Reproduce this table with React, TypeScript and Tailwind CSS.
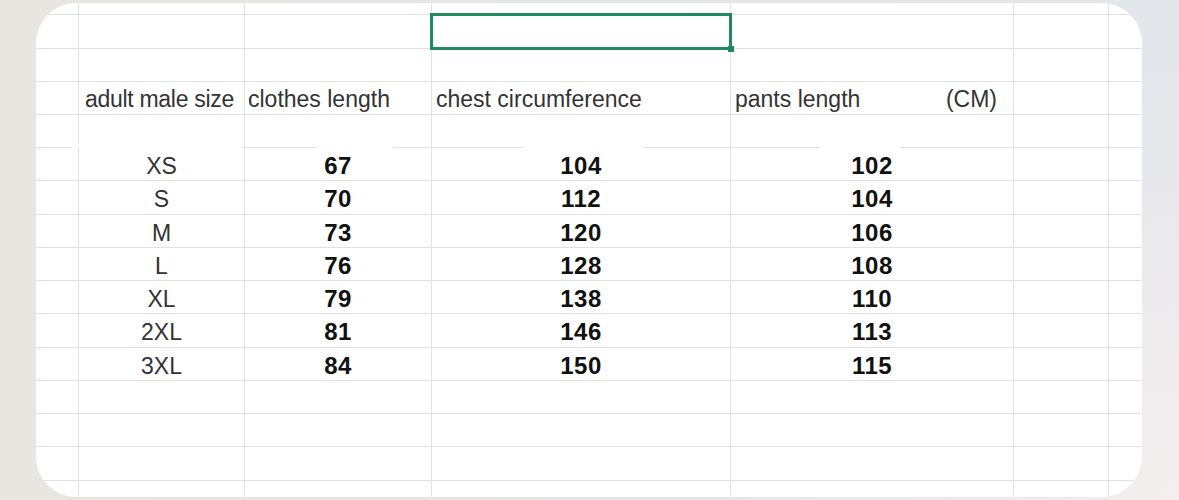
const rowHeights = [34, 33, 33, 33, 33, 34, 33, 33, 33, 34, 33, 33, 33, 34];

const sizes = [
  { size: "XS", clothes: 67, chest: 104, pants: 102 },
  { size: "S", clothes: 70, chest: 112, pants: 104 },
  { size: "M", clothes: 73, chest: 120, pants: 106 },
  { size: "L", clothes: 76, chest: 128, pants: 108 },
  { size: "XL", clothes: 79, chest: 138, pants: 110 },
  { size: "2XL", clothes: 81, chest: 146, pants: 113 },
  { size: "3XL", clothes: 84, chest: 150, pants: 115 },
];

const cols = "grid grid-cols-[42px_166px_187px_299px_283px_95px_34px]";
const cell = "border-l border-[#e2e2e2] first:border-l-0";
const num = `${cell} flex items-center justify-center pb-[1px] text-[24px] font-bold tracking-[0.5px] text-[#111]`;
const head = `${cell} flex items-center text-[23px] whitespace-nowrap text-[#333]`;

function EmptyCells() {
  return (
    <>
      {Array.from({ length: 7 }).map((_, i) => (
        <div key={i} className={cell} />
      ))}
    </>
  );
}

function Row({ index, children }: { index: number; children?: React.ReactNode }) {
  return (
    <div
      className={`${cols} border-t border-[#e2e2e2]`}
      style={{ height: rowHeights[index] }}
    >
      {children ?? <EmptyCells />}
    </div>
  );
}

export default function App() {
  return (
    <div
      className="h-[500px] w-[1179px] overflow-hidden pl-[36px] pt-[3px] bg-[radial-gradient(circle_at_100%_100%,#f4eeee_0%,rgba(244,238,238,0)_35%),linear-gradient(90deg,#e9e6e1_0%,#e6e6e6_50%,#e3e6eb_100%)]"
      style={{ fontFamily: '"Liberation Sans", Arial, sans-serif' }}
    >
      <div className="relative h-[494px] w-[1106px] overflow-hidden rounded-[40px] bg-white">
        {/* top strip above first line */}
        <div className={`${cols} h-[11px]`}>
          <EmptyCells />
        </div>

        {/* selection row */}
        <Row index={0}>
          <div className={cell} />
          <div className={cell} />
          <div className={cell} />
          <div className={`${cell} relative`}>
            <div className="absolute -left-[2px] -top-[2px] -right-[2px] -bottom-[2px] border-[3px] border-[#1f8a5f]" />
            <div className="absolute -right-[4px] -bottom-[4px] h-[6px] w-[6px] bg-[#1f8a5f]" />
          </div>
          <div className={cell} />
          <div className={cell} />
          <div className={cell} />
        </Row>

        <Row index={1} />

        {/* header */}
        <Row index={2}>
          <div className={cell} />
          <div className={`${head} pl-[6px] tracking-[-0.3px]`}>adult male size</div>
          <div className={`${head} pl-[3px]`}>clothes length</div>
          <div className={`${head} pl-[4px]`}>chest circumference</div>
          <div className={`${head} justify-between pl-[4px] pr-[16px]`}>
            <span>pants length</span>
            <span>(CM)</span>
          </div>
          <div className={cell} />
          <div className={cell} />
        </Row>

        <Row index={3} />

        {sizes.map((s, i) => (
          <Row key={s.size} index={4 + i}>
            <div className={cell} />
            <div className={`${cell} flex items-center justify-center pb-[1px] text-[23px] text-[#333]`}>
              {s.size}
            </div>
            <div className={num}>{s.clothes}</div>
            <div className={num}>{s.chest}</div>
            <div className={num}>{s.pants}</div>
            <div className={cell} />
            <div className={cell} />
          </Row>
        ))}

        <Row index={11} />
        <Row index={12} />
        <Row index={13} />

        <div className={`${cols} h-[17px] border-t border-[#e2e2e2]`}>
          <EmptyCells />
        </div>

        {/* erased bits of the line above the first size row */}
        <div className="absolute left-[36px] top-[142px] h-[3px] w-[170px] bg-white" />
        <div className="absolute left-[281px] top-[142px] h-[3px] w-[76px] bg-white" />
        <div className="absolute left-[487px] top-[142px] h-[3px] w-[120px] bg-white" />
        <div className="absolute left-[784px] top-[142px] h-[3px] w-[80px] bg-white" />
      </div>
    </div>
  );
}
